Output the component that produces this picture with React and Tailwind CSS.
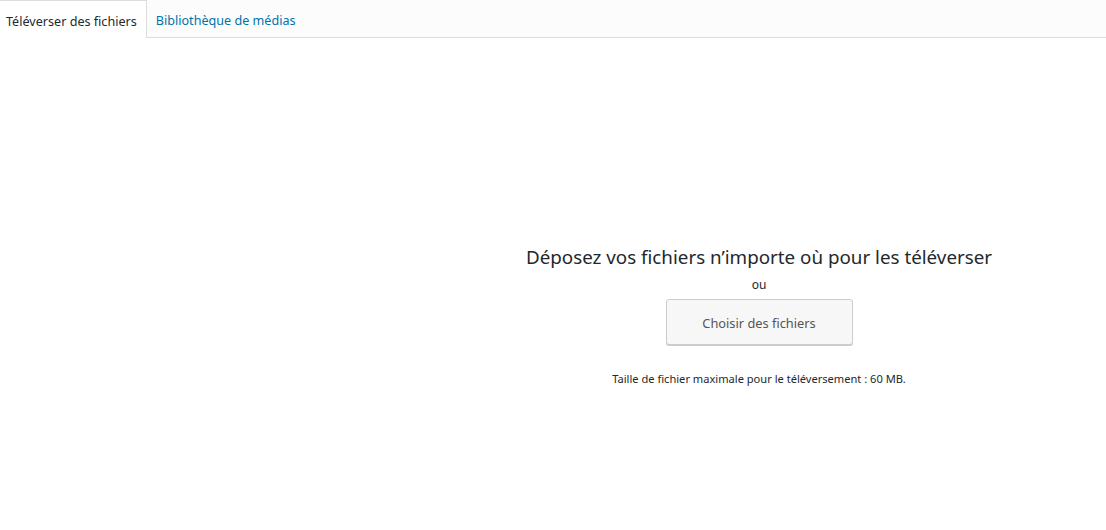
import React from "react";

const App = () => {
  return (
    <div
      className="w-[1106px] h-[530px] bg-white text-[#23282d]"
      style={{ fontFamily: '"Noto Sans", "Open Sans", sans-serif' }}
    >
      {/* tabs */}
      <div className="h-[38px] bg-[#fcfcfc] border-b border-[#dddddd] flex items-end">
        <div className="h-[38px] -mb-px bg-white border-t border-r border-[#dddddd] pl-[6px] pr-[9px] pt-[5px] flex items-center text-[12.6px] text-[#23282d]">
          Téléverser des fichiers
        </div>
        <div className="h-[37px] pl-[9px] pr-[9px] pt-[5px] flex items-center text-[12.6px] text-[#0073aa]">
          Bibliothèque de médias
        </div>
      </div>

      <div className="flex">
        <div className="w-[412px] shrink-0" />
        <div className="flex-1 flex flex-col items-center pt-[206px]">
          <h2 className="text-[18.8px] leading-[26px]">
            Déposez vos fichiers n’importe où pour les téléverser
          </h2>
          <p className="text-[12px] leading-[18px] mt-[6px]">ou</p>
          <button className="mt-[5px] w-[187px] h-[46px] pt-[3px] bg-[#f7f7f7] border border-[#cccccc] rounded-[3px] shadow-[0_1px_0_#cccccc] text-[12.8px] text-[#555555]">
            Choisir des fichiers
          </button>
          <p className="mt-[26px] text-[11.1px] leading-[16px]">
            Taille de fichier maximale pour le téléversement : 60 MB.
          </p>
        </div>
      </div>
    </div>
  );
};

export default App;
